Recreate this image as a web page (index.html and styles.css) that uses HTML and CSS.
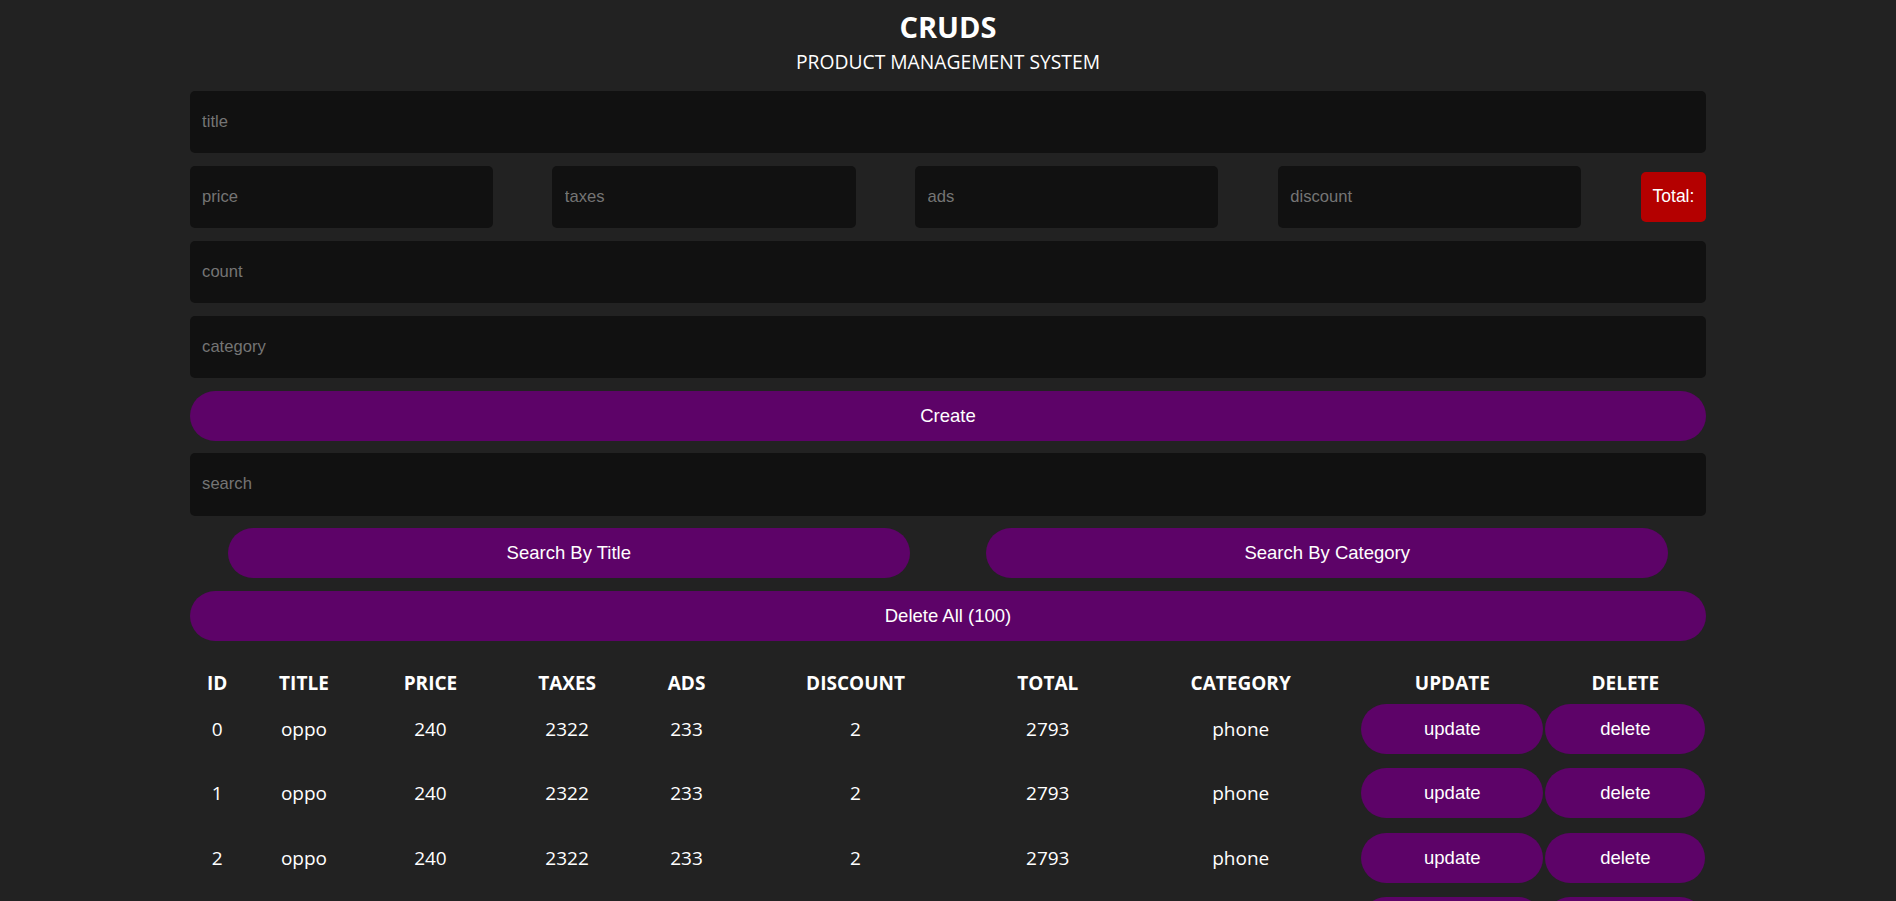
FILE: index.html
```html
<!DOCTYPE html>
<html lang="en">
<head>
<meta charset="UTF-8">
<title>CRUDS</title>
<link rel="stylesheet" href="styles.css">
</head>
<body>
<div class="crud">
  <header class="head">
    <h1 class="head-title">CRUDS</h1>
    <p class="head-sub">PRODUCT MANAGEMENT SYSTEM</p>
  </header>
  <div class="inputs">
    <input class="field" type="text" placeholder="title">
    <div class="price">
      <input class="field field-small" type="number" placeholder="price">
      <input class="field field-small" type="number" placeholder="taxes">
      <input class="field field-small" type="number" placeholder="ads">
      <input class="field field-small" type="number" placeholder="discount">
      <small class="total">Total:</small>
    </div>
    <input class="field" type="number" placeholder="count">
    <input class="field" type="text" placeholder="category">
    <button class="btn">Create</button>
  </div>
  <div class="output">
    <input class="field" type="text" placeholder="search">
    <div class="search-btns">
      <button class="btn btn-half">Search By Title</button>
      <button class="btn btn-half">Search By Category</button>
    </div>
    <button class="btn">Delete All (100)</button>
  </div>
  <table class="table">
    <colgroup>
      <col class="c-id"><col class="c-title"><col class="c-price"><col class="c-taxes"><col class="c-ads">
      <col class="c-discount"><col class="c-total"><col class="c-category"><col class="c-update"><col class="c-delete">
    </colgroup>
    <thead>
      <tr>
        <th>ID</th><th>TITLE</th><th>PRICE</th><th>TAXES</th><th>ADS</th><th>DISCOUNT</th><th>TOTAL</th><th>CATEGORY</th><th>UPDATE</th><th>DELETE</th>
      </tr>
    </thead>
    <tbody>
      <tr><td>0</td><td>oppo</td><td>240</td><td>2322</td><td>233</td><td>2</td><td>2793</td><td>phone</td><td><button class="btn btn-row">update</button></td><td><button class="btn btn-row">delete</button></td></tr>
      <tr><td>1</td><td>oppo</td><td>240</td><td>2322</td><td>233</td><td>2</td><td>2793</td><td>phone</td><td><button class="btn btn-row">update</button></td><td><button class="btn btn-row">delete</button></td></tr>
      <tr><td>2</td><td>oppo</td><td>240</td><td>2322</td><td>233</td><td>2</td><td>2793</td><td>phone</td><td><button class="btn btn-row">update</button></td><td><button class="btn btn-row">delete</button></td></tr>
      <tr><td>3</td><td>oppo</td><td>240</td><td>2322</td><td>233</td><td>2</td><td>2793</td><td>phone</td><td><button class="btn btn-row">update</button></td><td><button class="btn btn-row">delete</button></td></tr>
    </tbody>
  </table>
</div>
</body>
</html>
```

FILE: styles.css
```css
html {
  scrollbar-width: none;
}
html::-webkit-scrollbar {
  display: none;
}
* {
  box-sizing: border-box;
}
body {
  margin: 0;
  background: #222222;
  color: #ffffff;
  font-family: "Open Sans", "Noto Sans", sans-serif;
  font-size: 19px;
}
.crud {
  width: 80%;
  margin: 0 auto;
}
.head {
  text-align: center;
  padding-top: 7px;
}
.head-title {
  margin: 0;
  font-size: 29px;
  font-weight: 700;
  line-height: 39px;
}
.head-sub {
  margin: 2px 0 0;
  font-size: 19.3px;
  line-height: 27px;
}
.inputs,
.output {
  display: flex;
  flex-direction: column;
  gap: 12.5px;
}
.inputs {
  margin-top: 15.5px;
}
.output {
  margin-top: 12.5px;
}
.field {
  display: block;
  width: 100%;
  height: 62.5px;
  border: none;
  outline: none;
  background: #111111;
  border-radius: 5px;
  padding: 0 12.5px;
  color: #ffffff;
  font-family: "Liberation Sans", Arial, sans-serif;
  font-size: 16.6px;
  -moz-appearance: textfield;
}
.field::-webkit-outer-spin-button,
.field::-webkit-inner-spin-button {
  -webkit-appearance: none;
  margin: 0;
}
.field::placeholder {
  color: #757575;
}
.price {
  display: flex;
  justify-content: space-between;
  align-items: center;
}
.field-small {
  width: 20%;
}
.total {
  display: flex;
  align-items: center;
  height: 50px;
  padding: 0 12px;
  background: #b40000;
  border-radius: 5px;
  font-family: "Liberation Sans", Arial, sans-serif;
  font-size: 17.5px;
  color: #ffffff;
}
.btn {
  display: block;
  width: 100%;
  height: 50px;
  border: none;
  border-radius: 25px;
  background: #5d0368;
  color: #ffffff;
  font-family: "Liberation Sans", Arial, sans-serif;
  font-size: 18.5px;
  cursor: pointer;
}
.search-btns {
  display: flex;
  justify-content: space-around;
}
.btn-half {
  width: 45%;
}
.table {
  width: 100%;
  margin-top: 28px;
  border-collapse: collapse;
  table-layout: fixed;
  text-align: center;
}
.c-id { width: 3.63%; }
.c-title { width: 7.82%; }
.c-price { width: 8.86%; }
.c-taxes { width: 9.16%; }
.c-ads { width: 6.59%; }
.c-discount { width: 15.69%; }
.c-total { width: 9.66%; }
.c-category { width: 15.78%; }
.c-update { width: 12.13%; }
.c-delete { width: 10.68%; }
.table th {
  height: 28px;
  padding: 0;
  font-weight: 700;
  font-size: 19px;
  line-height: 28px;
}
.table td {
  height: 64.5px;
  padding: 0 1px;
  vertical-align: middle;
  font-size: 19px;
}
```
